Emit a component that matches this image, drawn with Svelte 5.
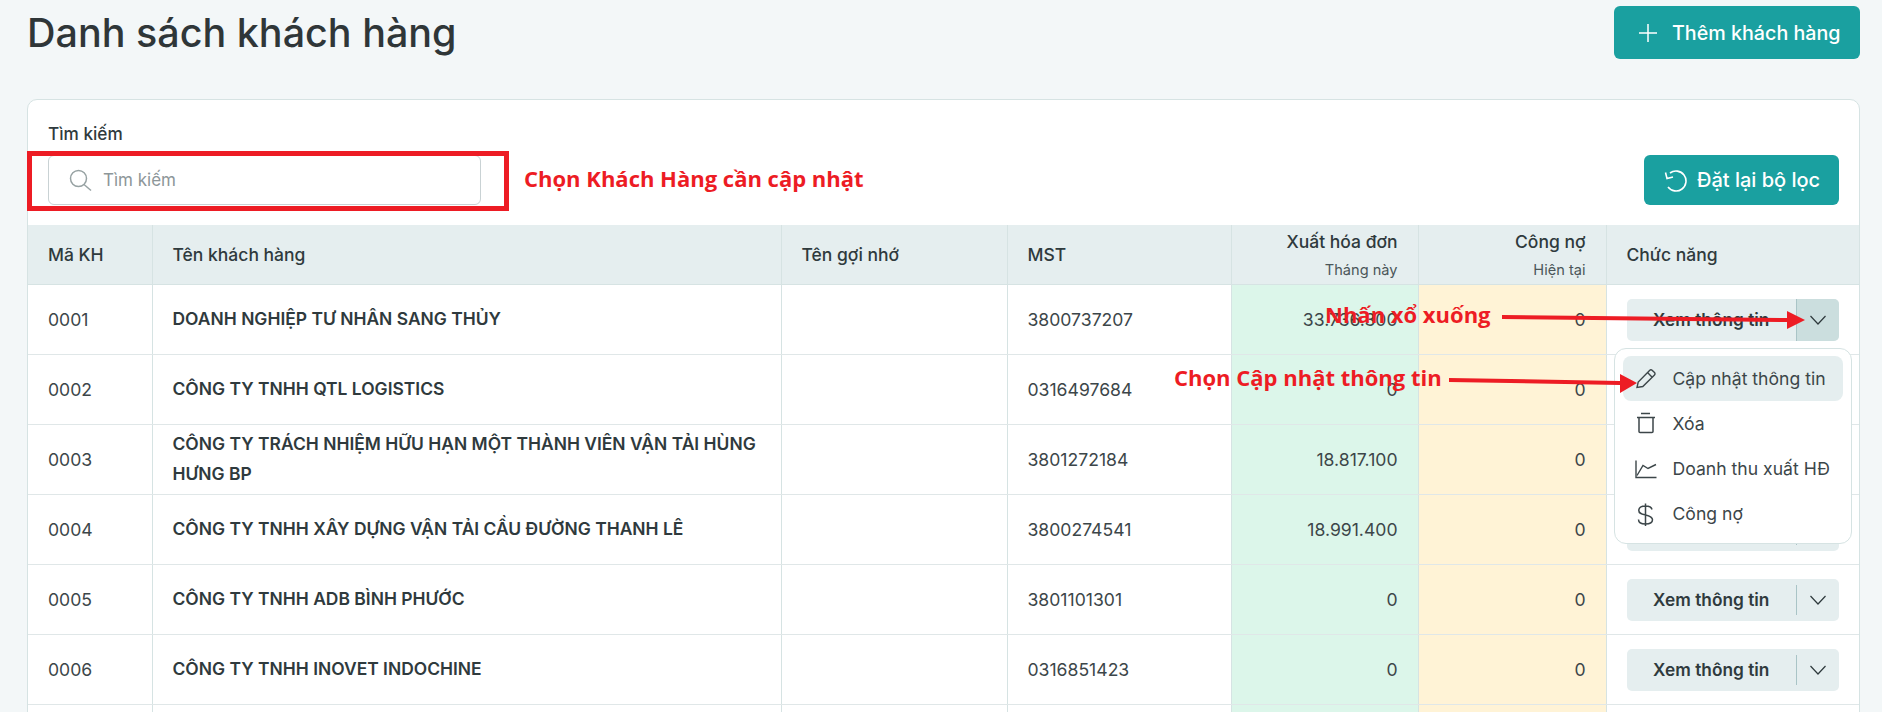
<script>
  const rows = [
    { code: '0001', name: 'DOANH NGHIỆP TƯ NHÂN SANG THỦY', mst: '3800737207', inv: '33.736.300', debt: '0', hot: true },
    { code: '0002', name: 'CÔNG TY TNHH QTL LOGISTICS', mst: '0316497684', inv: '0', debt: '0' },
    { code: '0003', name: 'CÔNG TY TRÁCH NHIỆM HỮU HẠN MỘT THÀNH VIÊN VẬN TẢI HÙNG HƯNG BP', mst: '3801272184', inv: '18.817.100', debt: '0' },
    { code: '0004', name: 'CÔNG TY TNHH XÂY DỰNG VẬN TẢI CẦU ĐƯỜNG THANH LÊ', mst: '3800274541', inv: '18.991.400', debt: '0' },
    { code: '0005', name: 'CÔNG TY TNHH ADB BÌNH PHƯỚC', mst: '3801101301', inv: '0', debt: '0' },
    { code: '0006', name: 'CÔNG TY TNHH INOVET INDOCHINE', mst: '0316851423', inv: '0', debt: '0' }
  ];
</script>

<div class="page">
  <header class="top">
    <h1>Danh sách khách hàng</h1>
    <button class="primary add">
      <svg width="24" height="24" viewBox="0 0 24 24" fill="none" stroke="currentColor" stroke-width="1.5"><path d="M12 3v18M3 12h18" /></svg>
      Thêm khách hàng
    </button>
  </header>

  <section class="card">
    <div class="filters">
      <div class="field">
        <span class="label">Tìm kiếm</span>
        <div class="input">
          <svg width="24" height="24" viewBox="0 0 24 24" fill="none" stroke="#97a2a3" stroke-width="1.5"><circle cx="9.500" cy="10.500" r="8" /><path d="M15 16.500l7 6" /></svg>
          <span>Tìm kiếm</span>
        </div>
      </div>
      <button class="primary reset">
        <svg width="24" height="24" viewBox="0 0 24 24" fill="none" stroke="currentColor" stroke-width="1.600"><path d="M6 5A10 10 0 1 1 4 19" /><path d="M1.500 4.500L3 10.500L9 9" /></svg>
        Đặt lại bộ lọc
      </button>
    </div>

    <table>
      <colgroup>
        <col class="c1" /><col class="c2" /><col class="c3" /><col class="c4" /><col class="c5" /><col class="c6" /><col />
      </colgroup>
      <thead>
        <tr>
          <th>Mã KH</th>
          <th>Tên khách hàng</th>
          <th>Tên gợi nhớ</th>
          <th>MST</th>
          <th class="num">Xuất hóa đơn<small>Tháng này</small></th>
          <th class="num">Công nợ<small>Hiện tại</small></th>
          <th>Chức năng</th>
        </tr>
      </thead>
      <tbody>
        {#each rows as r}
          <tr>
            <td>{r.code}</td>
            <td class="name">{r.name}</td>
            <td></td>
            <td>{r.mst}</td>
            <td class="num green">{r.inv}</td>
            <td class="num yellow">{r.debt}</td>
            <td class="actions">
              <div class="split" class:hot={r.hot}>
                <span class="view">Xem thông tin</span>
                <span class="chev">
                  <svg width="18" height="18" viewBox="0 0 18 18" fill="none" stroke="#2f3a3d" stroke-width="1.200"><path d="M1.500 5L9 13L16.500 5" /></svg>
                </span>
              </div>
              {#if r.hot}
                <div class="menu">
                  <div class="item active">
                    <svg width="24" height="24" viewBox="0 0 24 24" fill="none" stroke="currentColor" stroke-width="1.400"><path d="M4 20.500l1.200-5.500L16.800 3.200a1.600 1.600 0 0 1 2.300 0l2.400 2.400a1.600 1.600 0 0 1 0 2.300L9.800 19.500z" /><path d="M14.500 5.500l4.700 4.700" /></svg>
                    Cập nhật thông tin
                  </div>
                  <div class="item">
                    <svg width="24" height="24" viewBox="0 0 24 24" fill="none" stroke="currentColor" stroke-width="1.500"><path d="M4 5.500h18M8 1.500h9M6 5.500v14a1 1 0 0 0 1 1h12a1 1 0 0 0 1-1v-14" /></svg>
                    Xóa
                  </div>
                  <div class="item">
                    <svg width="24" height="24" viewBox="0 0 24 24" fill="none" stroke="currentColor" stroke-width="1.400"><path d="M3 3.500v17h20.500" /><path d="M4 18.500l6-10 5 3 8-4" /></svg>
                    Doanh thu xuất HĐ
                  </div>
                  <div class="item">
                    <svg width="24" height="24" viewBox="0 0 24 24" fill="none" stroke="currentColor" stroke-width="1.500"><path d="M12.500 1.500v22.500M19 7.500C18.500 5 16 4 12.500 4S5.800 5.500 5.800 8.500 8.500 12 12.500 13s7 2 7 4.800-3 4.200-7 4.200-7-1.500-7-4.500" /></svg>
                    Công nợ
                  </div>
                </div>
              {/if}
            </td>
          </tr>
        {/each}
        <tr>
          <td></td><td></td><td></td><td></td><td class="green"></td><td class="yellow"></td><td></td>
        </tr>
      </tbody>
    </table>
  </section>

  <div class="marks">
    <div class="redbox"></div>
    <span class="note n1">Chọn Khách Hàng cần cập nhật</span>
    <span class="note n2">Nhấn xổ xuống</span>
    <span class="note n3">Chọn Cập nhật thông tin</span>
    <svg class="arrows" width="1882" height="712" viewBox="0 0 1882 712" fill="#ed1c24" stroke="none">
      <path d="M1502 315L1787 318V311L1805 320L1787 329V322L1502 319z" />
      <path d="M1449 378L1620 381V374L1637 383L1620 393V385L1449 382z" />
    </svg>
  </div>
</div>

<style>
  :global(body) {
    margin: 0;
    background: #f3f7f8;
    overflow: hidden;
  }
  .page {
    position: relative;
    height: 712px;
    overflow: hidden;
    box-sizing: border-box;
    padding: 6px 22px 0 27px;
    font-family: Inter, sans-serif;
    font-size: 17.6px;
    color: #2f3a3d;
  }
  .top {
    display: flex;
    justify-content: space-between;
    align-items: flex-start;
    height: 93px;
  }
  h1 {
    margin: 4px 0 0;
    font-size: 39.500px;
    line-height: 46px;
    font-weight: 500;
    color: #2f3638;
  }
  .primary {
    display: flex;
    align-items: center;
    border: 0;
    background: #1aa0a0;
    color: #fff;
    font: 500 19.7px Inter, sans-serif;
    border-radius: 6px;
    box-sizing: border-box;
  }
  .add {
    width: 246px;
    height: 53px;
    padding: 0 0 0 22px;
    gap: 12px;
  }
  .reset {
    width: 195px;
    height: 50px;
    padding: 0 0 0 20px;
    gap: 9px;
    font-size: 20px;
  }
  .card {
    background: #fff;
    border: 1px solid #d6e3e3;
    border-radius: 10px;
    overflow: hidden;
    height: 640px;
  }
  .filters {
    display: flex;
    justify-content: space-between;
    align-items: flex-end;
    padding: 24px 20px 20px 20px;
  }
  .field {
    display: flex;
    flex-direction: column;
    gap: 12px;
  }
  .label {
    font-size: 17.2px;
    line-height: 19px;
    font-weight: 500;
  }
  .input {
    width: 433px;
    height: 50px;
    box-sizing: border-box;
    border: 1px solid #c9d2d4;
    border-radius: 6px;
    display: flex;
    align-items: center;
    gap: 10px;
    padding-left: 20px;
    color: #8d9699;
    font-size: 17px;
  }
  table {
    width: 100%;
    border-collapse: collapse;
    table-layout: fixed;
  }
  .c1 { width: 124px; }
  .c2 { width: 629px; }
  .c3 { width: 226px; }
  .c4 { width: 224px; }
  .c5 { width: 187px; }
  .c6 { width: 188px; }
  th {
    background: #e5eeef;
    height: 59px;
    padding: 0 20px;
    text-align: left;
    font-weight: 500;
    font-size: 17.5px;
    border-right: 1px solid #d6e3e3;
    border-bottom: 1px solid #d6e3e3;
  }
  th:last-child, td:last-child { border-right: 0; }
  th small {
    display: block;
    font-size: 14.6px;
    font-weight: 400;
    margin-top: 9px;
    color: #4b5659;
  }
  td {
    height: 70px;
    box-sizing: border-box;
    padding: 0 20px;
    border-right: 1px solid #d6e3e3;
    border-bottom: 1px solid #e0e7e8;
    line-height: 30px;
    font-size: 17.6px;
    color: #3c4649;
  }
  .name {
    font-weight: 600;
    font-size: 17.45px;
    color: #2f3a3d;
    padding-right: 4px;
    padding-bottom: 2px;
  }
  .num { text-align: right; }
  .green { background: #dcf6ea; }
  .yellow { background: #fff3d6; }
  .actions { position: relative; }
  .split {
    display: flex;
    height: 42px;
    background: #e5eeef;
    border-radius: 5px;
    overflow: hidden;
    align-items: center;
  }
  .view {
    flex: 1;
    text-align: center;
    font-weight: 600;
    font-size: 17.3px;
    color: #2f3a3d;
  }
  .chev {
    width: 43px;
    height: 30px;
    display: flex;
    align-items: center;
    justify-content: center;
    border-left: 1px solid #a9c4c6;
    box-sizing: border-box;
  }
  .hot .chev {
    height: 42px;
    background: #cbdede;
  }
  .menu {
    position: absolute;
    left: 7px;
    top: 63px;
    width: 238px;
    height: 196px;
    box-sizing: border-box;
    background: #fff;
    border: 1px solid #d6e3e3;
    border-radius: 12px;
    padding: 7px 8px;
    z-index: 2;
  }
  .item {
    height: 45px;
    display: flex;
    align-items: center;
    gap: 16px;
    padding-left: 10px;
    border-radius: 8px;
    font-size: 17.6px;
    color: #3c4649;
  }
  .item.active { background: #e5eeef; }
  .marks {
    position: absolute;
    inset: 0;
    pointer-events: none;
    z-index: 3;
  }
  .redbox {
    position: absolute;
    left: 27px;
    top: 151px;
    width: 482px;
    height: 60px;
    box-sizing: border-box;
    border: 5px solid #ed1c24;
  }
  .note {
    position: absolute;
    font: 700 22px/28px "Open Sans", sans-serif;
    color: #ed1c24;
    white-space: nowrap;
  }
  .n1 { left: 524px; top: 164px; }
  .n2 { left: 1325px; top: 300px; }
  .n3 { left: 1174px; top: 363px; }
  .arrows {
    position: absolute;
    left: 0;
    top: 0;
  }
</style>
